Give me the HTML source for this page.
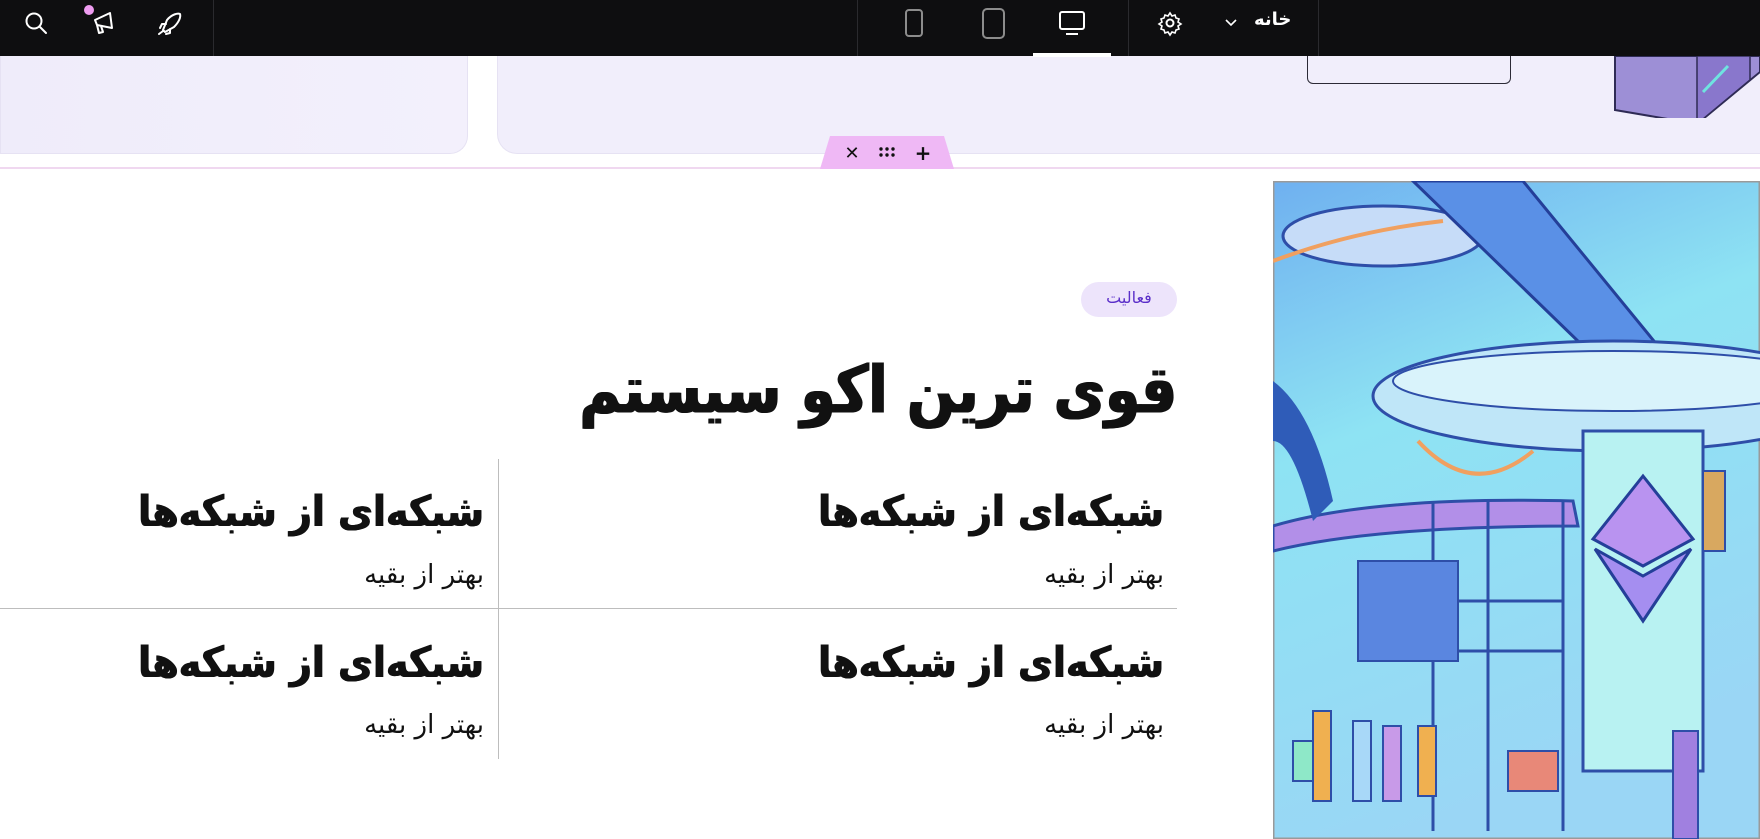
<!DOCTYPE html>
<html><head><meta charset="utf-8"><style>
*{margin:0;padding:0;box-sizing:border-box}
body{width:1760px;height:839px;overflow:hidden;background:#fff;position:relative;font-family:"DejaVu Sans","Liberation Sans",sans-serif}
.abs{position:absolute}
.bar{left:0;top:0;width:1760px;height:56px;background:#0e0e10}
.div{top:0;width:1px;height:56px;background:#2a2a2e}
.fa{direction:rtl;white-space:nowrap;color:#111}
.t{font-size:38px;font-weight:bold;text-shadow:0.6px 0 #111,-0.6px 0 #111;transform:scaleY(1.12);transform-origin:right top}
.s{font-size:26px}
</style></head><body>
<div class="abs" style="left:0;top:56px;width:468px;height:98px;background:linear-gradient(90deg,#efecfa,#f3f0fc);border-radius:0 0 18px 0;border:1px solid #e6e2f3;border-top:none"></div>
<div class="abs" style="left:497px;top:56px;width:1263px;height:98px;background:#f1eefb;border-radius:0 0 0 20px;border:1px solid #e6e2f3;border-top:none;border-right:none"></div>
<div class="abs" style="left:1307px;top:52px;width:204px;height:32px;border:1.5px solid #2c2a36;border-top:none;border-radius:0 0 6px 6px"></div>
<svg class="abs" style="left:1610px;top:52px" width="150" height="66"><polygon points="5,4 5,58 87,72 150,20 150,4" fill="#9d8fd6" stroke="#2f2b55" stroke-width="2"/><polygon points="87,4 87,72 140,28 140,4" fill="#8977cc" stroke="#2f2b55" stroke-width="1.5"/><line x1="93" y1="40" x2="118" y2="14" stroke="#6fe3e0" stroke-width="3"/></svg>
<div class="abs" style="left:0;top:167px;width:1760px;height:2px;background:#f0d8f0"></div>
<svg class="abs" style="left:820px;top:136px" width="134" height="33"><polygon points="10,0 124,0 134,33 0,33" fill="#efb8f5"/><text x="32" y="23" font-size="18" font-family="DejaVu Sans" fill="#111" text-anchor="middle">✕</text><g fill="#111"><circle cx="61" cy="13" r="1.7"/><circle cx="67" cy="13" r="1.7"/><circle cx="73" cy="13" r="1.7"/><circle cx="61" cy="19" r="1.7"/><circle cx="67" cy="19" r="1.7"/><circle cx="73" cy="19" r="1.7"/></g><text x="103" y="24" font-size="20" fill="#111" text-anchor="middle" font-weight="bold">+</text></svg>

<div class="abs bar"></div>
<div class="abs div" style="left:213px"></div>
<div class="abs div" style="left:857px"></div>
<div class="abs div" style="left:1128px"></div>
<div class="abs div" style="left:1318px"></div>
<svg class="abs" style="left:0;top:0" width="240" height="56" fill="none" stroke="#fff" stroke-width="2" stroke-linecap="round" stroke-linejoin="round">
<circle cx="34" cy="21" r="7.5"/><line x1="40" y1="27" x2="46" y2="33"/>
<circle cx="89" cy="10" r="5" fill="#ee9cf0" stroke="none"/>
<path d="M95 20 L110 13 L112 28 L97 25 Z M95 20 L97 25 M97 25 L99 33 L103 32 L101 26"/>
<path d="M163 30 L167 20 C172 14 178 13 180 14 C181 17 179 22 174 27 L165 32 Z M166 24 L162 24 L160 28 M170 29 L170 33 L166 34 M159 34 L163 31"/>
</svg>
<svg class="abs" style="left:880px;top:0" width="440" height="57" fill="none" stroke="#8c8c8c" stroke-width="2">
<rect x="26" y="10" width="16" height="26" rx="3"/>
<rect x="103" y="9" width="21" height="29" rx="4"/>
<rect x="180" y="12" width="24" height="17" rx="2" stroke="#fff"/><line x1="186" y1="34" x2="198" y2="34" stroke="#fff"/>
<rect x="153" y="53" width="78" height="4" fill="#fff" stroke="none"/>
<circle cx="290" cy="23" r="3.5" stroke="#fff"/><path d="M290 13 l2 3 3-1 1 3 3 1 -1 3 3 2 -3 2 1 3 -3 1 -1 3 -3 -1 -2 3 -2 -3 -3 1 -1 -3 -3 -1 1 -3 -3 -2 3 -2 -1 -3 3 -1 1 -3 3 1z" stroke="#fff" stroke-width="1.6"/>
<path d="M346 20 L351 25 L356 20" stroke="#fff" stroke-width="1.6"/>
</svg>
<div class="abs fa" style="left:1254px;top:9px;font-size:18px;color:#fff;font-weight:bold">خانه</div>

<div class="abs" style="left:1081px;top:282px;width:96px;height:35px;border-radius:18px;background:#ede4fb"></div>
<div class="abs fa" style="left:1081px;top:288px;width:96px;text-align:center;font-size:16px;color:#5b2fc9">فعالیت</div>
<div class="abs fa" style="right:583px;top:344px;font-size:56px;font-weight:bold;letter-spacing:-1px;line-height:80px;text-shadow:1px 0 #111,-1px 0 #111;transform:scaleY(1.18);transform-origin:right top">قوی ترین اکو سیستم</div>
<div class="abs" style="left:0;top:608px;width:1177px;height:1px;background:#bdbdbd"></div>
<div class="abs" style="left:498px;top:459px;width:1px;height:300px;background:#bdbdbd"></div>
<div class="abs fa t" style="right:596px;top:487px">شبکه‌ای از شبکه‌ها</div>
<div class="abs fa s" style="right:596px;top:560px">بهتر از بقیه</div>
<div class="abs fa t" style="right:1276px;top:487px">شبکه‌ای از شبکه‌ها</div>
<div class="abs fa s" style="right:1276px;top:560px">بهتر از بقیه</div>
<div class="abs fa t" style="right:596px;top:638px">شبکه‌ای از شبکه‌ها</div>
<div class="abs fa s" style="right:596px;top:710px">بهتر از بقیه</div>
<div class="abs fa t" style="right:1276px;top:638px">شبکه‌ای از شبکه‌ها</div>
<div class="abs fa s" style="right:1276px;top:710px">بهتر از بقیه</div>

<svg class="abs" style="left:1273px;top:181px" width="487" height="658">
<defs><linearGradient id="g" x1="0" y1="0" x2="0.3" y2="1"><stop offset="0" stop-color="#6fb0f0"/><stop offset="0.4" stop-color="#8ee3f3"/><stop offset="1" stop-color="#9ad6f5"/></linearGradient></defs>
<rect x="0" y="0" width="487" height="658" fill="url(#g)" stroke="#9a9a9a" stroke-width="3"/>
<ellipse cx="110" cy="55" rx="100" ry="30" fill="#c6dcf8" stroke="#2e4ea8" stroke-width="3"/>
<path d="M140 0 L310 165 L385 165 L250 0Z" fill="#5a90e6" stroke="#243f99" stroke-width="3"/>
<path d="M0 80 Q80 50 170 40" stroke="#f0a060" stroke-width="4" fill="none"/>
<ellipse cx="340" cy="215" rx="240" ry="55" fill="#bfe6f8" stroke="#2e4ea8" stroke-width="3"/>
<ellipse cx="340" cy="200" rx="220" ry="30" fill="#d9f3fb" stroke="#2e4ea8" stroke-width="2"/>
<rect x="310" y="250" width="120" height="340" fill="#b8f2f2" stroke="#2e4ea8" stroke-width="3"/>
<path d="M145 260 Q200 320 260 270" stroke="#f0a060" stroke-width="4" fill="none"/>
<path d="M0 345 Q100 315 300 320 L305 345 Q100 345 0 370Z" fill="#b28fe8" stroke="#2e4ea8" stroke-width="3"/>
<g stroke="#2e4ea8" stroke-width="3" fill="none"><line x1="160" y1="320" x2="160" y2="650"/><line x1="215" y1="320" x2="215" y2="650"/><line x1="290" y1="320" x2="290" y2="650"/><line x1="160" y1="420" x2="290" y2="420"/><line x1="160" y1="470" x2="290" y2="470"/></g>
<rect x="85" y="380" width="100" height="100" fill="#5a86e0" stroke="#2e4ea8" stroke-width="2"/>
<polygon points="370,295 420,358 370,385 320,358" fill="#b993f0" stroke="#243f99" stroke-width="3"/>
<polygon points="370,395 418,368 370,440 322,368" fill="#a58ef0" stroke="#243f99" stroke-width="3"/>
<path d="M0 200 Q40 230 60 320 L40 340 Q20 260 0 260Z" fill="#2f5cb8"/>
<g fill="#f0b050" stroke="#2e4ea8" stroke-width="2"><rect x="40" y="530" width="18" height="90"/><rect x="145" y="545" width="18" height="70"/><rect x="20" y="560" width="20" height="40" fill="#8ee8c8"/><rect x="80" y="540" width="18" height="80" fill="#a8d8f8"/><rect x="110" y="545" width="18" height="75" fill="#c89ae8"/><rect x="235" y="570" width="50" height="40" fill="#e88878"/><rect x="400" y="550" width="25" height="108" fill="#a080e0"/><rect x="430" y="290" width="22" height="80" fill="#d8a860"/></g>
</svg>
</body></html>
